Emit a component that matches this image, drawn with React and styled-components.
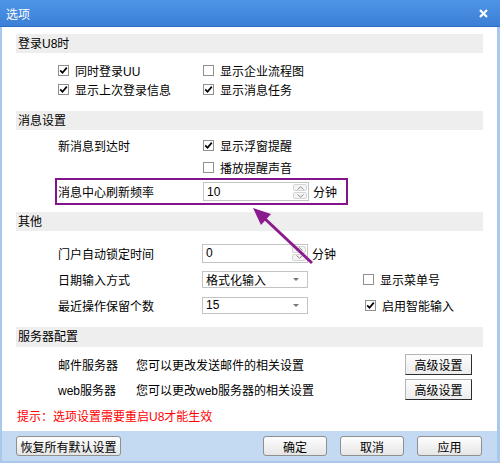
import React from "react";
import styled, { createGlobalStyle } from "styled-components";

const GlobalStyle = createGlobalStyle`
  html, body {
    margin: 0;
    padding: 0;
    background: #fff;
  }
  body {
    font-family: "Liberation Sans", "Noto Sans CJK SC", sans-serif;
    font-size: 12px;
    color: #000;
  }
  * {
    box-sizing: border-box;
  }
`;

const Frame = styled.div`
  position: relative;
  width: 500px;
  height: 463px;
  display: flex;
  flex-direction: column;
  background: #aac8ec;
  padding: 0 3px 2px 2px;
`;

const TitleBar = styled.div`
  height: 27px;
  margin: 0 -3px 0 -2px;
  padding: 0 12px 0 6px;
  display: flex;
  align-items: center;
  justify-content: space-between;
  color: #fff;
  background: linear-gradient(#4f95e5, #3b7fd7);
  border-bottom: 1px solid #2f6cbf;
  font-size: 12px;
`;

const Body = styled.div`
  flex: 1;
  background: #fff;
  padding: 7px 14px 0;
`;

const Header = styled.div`
  height: ${(p) => p.$h || 19}px;
  background: #eeeeee;
  padding-left: 2px;
  display: flex;
  align-items: center;
  line-height: 1;
`;

const Rows = styled.div`
  padding: ${(p) => p.$pad};
  padding-left: 42px;
`;

const Row = styled.div`
  height: ${(p) => p.$h}px;
  display: grid;
  grid-template-columns: ${(p) => p.$cols};
  align-items: center;
  white-space: nowrap;
`;

const Highlight = styled.div`
  width: 293px;
  height: 27px;
  margin-left: -3px;
  padding-left: 1px;
  border: 2px solid #84148a;
  display: grid;
  grid-template-columns: 145px auto;
  align-items: center;
  white-space: nowrap;
`;

const Check = styled.label`
  display: flex;
  align-items: center;
  gap: 6px;
  margin-left: ${(p) => p.$shift || 0}px;
`;

const Box = styled.span`
  width: 11px;
  height: 11px;
  border: 1px solid #8f8f8f;
  background: #fff;
  display: flex;
  align-items: center;
  justify-content: center;
`;

const Inline = styled.div`
  display: flex;
  align-items: center;
  gap: 4px;
`;

const Field = styled.div`
  width: 106px;
  height: ${(p) => p.$h || 19}px;
  border: 1px solid #c4c4c4;
  background: #fff;
  display: flex;
  align-items: center;
  padding-left: 3px;
`;

const Spin = styled.div`
  margin-left: auto;
  width: 16px;
  height: 100%;
  display: flex;
  flex-direction: column;
  padding: 1px;
  gap: 1px;
`;

const SpinHalf = styled.div`
  flex: 1;
  border: 1px solid #d6d6d6;
  border-radius: 2px;
  background: #f4f4f4;
  display: flex;
  align-items: center;
  justify-content: center;
`;

const Arrow = styled.span`
  margin-left: auto;
  margin-right: 8px;
  width: 0;
  height: 0;
  border-left: 3px solid transparent;
  border-right: 3px solid transparent;
  border-top: 3px solid #777;
`;

const Desc = styled.span`
  color: #000;
`;

const ClassicButton = styled.button`
  width: 67px;
  height: 21px;
  margin-right: 11px;
  padding: 0;
  font: inherit;
  color: #000;
  background: linear-gradient(#fdfdfd, #ececec);
  border: 1px solid #b5b5b5;
  border-right-color: #2c2c2c;
  border-bottom-color: #2c2c2c;
`;

const Hint = styled.div`
  margin-top: 7px;
  line-height: 16px;
  padding-left: 1px;
  color: #ff0000;
`;

const Footer = styled.div`
  height: 30px;
  background: #c4d9f2;
  display: flex;
  align-items: center;
  padding: 0 15px 0 14px;
  gap: 13px;
`;

const FootButton = styled.button`
  width: ${(p) => p.$w}px;
  height: 20px;
  margin-right: ${(p) => (p.$push ? "auto" : "0")};
  padding: 0;
  font: inherit;
  color: #000;
  border: 1px solid #8e8f8f;
  border-radius: 3px;
  background: linear-gradient(#fefefe, #e5e5e5);
`;

const Overlay = styled.svg`
  position: absolute;
  left: 0;
  top: 0;
  pointer-events: none;
`;

function CheckBox({ checked, children, shift }) {
  return (
    <Check $shift={shift}>
      <Box>
        {checked && (
          <svg width="9" height="9" viewBox="0 0 9 9">
            <path d="M1.2 4.3 L3.5 6.8 L7.8 1.6" fill="none" stroke="#000" strokeWidth="1.7" />
          </svg>
        )}
      </Box>
      {children}
    </Check>
  );
}

function SpinField({ value }) {
  return (
    <Field>
      {value}
      <Spin>
        <SpinHalf>
          <svg width="7" height="4" viewBox="0 0 7 4">
            <path d="M0.5 3.5 L3.5 0.8 L6.5 3.5" fill="none" stroke="#8a8a8a" strokeWidth="1" />
          </svg>
        </SpinHalf>
        <SpinHalf>
          <svg width="7" height="4" viewBox="0 0 7 4">
            <path d="M0.5 0.5 L3.5 3.2 L6.5 0.5" fill="none" stroke="#8a8a8a" strokeWidth="1" />
          </svg>
        </SpinHalf>
      </Spin>
    </Field>
  );
}

function Combo({ value }) {
  return (
    <Field $h={17}>
      {value}
      <Arrow />
    </Field>
  );
}

export default function App() {
  return (
    <Frame>
      <GlobalStyle />
      <TitleBar>
        <span>选项</span>
        <svg width="9" height="9" viewBox="0 0 9 9">
          <path d="M1 1 L8 8 M8 1 L1 8" stroke="#fff" strokeWidth="2.2" />
        </svg>
      </TitleBar>
      <Body>
        <Header>登录U8时</Header>
        <Rows $pad="8px 0 12px">
          <Row $h={19} $cols="145px 1fr">
            <CheckBox checked>同时登录UU</CheckBox>
            <CheckBox>显示企业流程图</CheckBox>
          </Row>
          <Row $h={19} $cols="145px 1fr">
            <CheckBox checked>显示上次登录信息</CheckBox>
            <CheckBox checked>显示消息任务</CheckBox>
          </Row>
        </Rows>

        <Header>消息设置</Header>
        <Rows $pad="4px 0 7px">
          <Row $h={22} $cols="145px 1fr">
            <span>新消息到达时</span>
            <CheckBox checked>显示浮窗提醒</CheckBox>
          </Row>
          <Row $h={22} $cols="145px 1fr">
            <span />
            <CheckBox>播放提醒声音</CheckBox>
          </Row>
          <Highlight>
            <span>消息中心刷新频率</span>
            <Inline>
              <SpinField value="10" />
              <span>分钟</span>
            </Inline>
          </Highlight>
        </Rows>

        <Header>其他</Header>
        <Rows $pad="9px 0 9px">
          <Row $h={26} $cols="144px 161px 1fr">
            <span>门户自动锁定时间</span>
            <Inline>
              <SpinField value="0" />
              <span>分钟</span>
            </Inline>
            <span />
          </Row>
          <Row $h={26} $cols="144px 161px 1fr">
            <span>日期输入方式</span>
            <Combo value="格式化输入" />
            <CheckBox>显示菜单号</CheckBox>
          </Row>
          <Row $h={26} $cols="144px 161px 1fr">
            <span>最近操作保留个数</span>
            <Combo value="15" />
            <CheckBox checked shift={2}>启用智能输入</CheckBox>
          </Row>
        </Rows>

        <Header $h={20}>服务器配置</Header>
        <Rows $pad="5px 0 0">
          <Row $h={25} $cols="78px 1fr auto">
            <span>邮件服务器</span>
            <Desc>您可以更改发送邮件的相关设置</Desc>
            <ClassicButton>高级设置</ClassicButton>
          </Row>
          <Row $h={25} $cols="78px 1fr auto">
            <span>web服务器</span>
            <Desc>您可以更改web服务器的相关设置</Desc>
            <ClassicButton>高级设置</ClassicButton>
          </Row>
        </Rows>
        <Hint>提示：选项设置需要重启U8才能生效</Hint>
      </Body>
      <Footer>
        <FootButton $w={105} $push>恢复所有默认设置</FootButton>
        <FootButton $w={64}>确定</FootButton>
        <FootButton $w={64}>取消</FootButton>
        <FootButton $w={65}>应用</FootButton>
      </Footer>

      <Overlay width="500" height="463" viewBox="0 0 500 463">
        <line x1="312" y1="263" x2="263" y2="217" stroke="#8a1a8e" strokeWidth="3" />
        <polygon points="253,208 271,214 261,225" fill="#8a1a8e" />
      </Overlay>
    </Frame>
  );
}
